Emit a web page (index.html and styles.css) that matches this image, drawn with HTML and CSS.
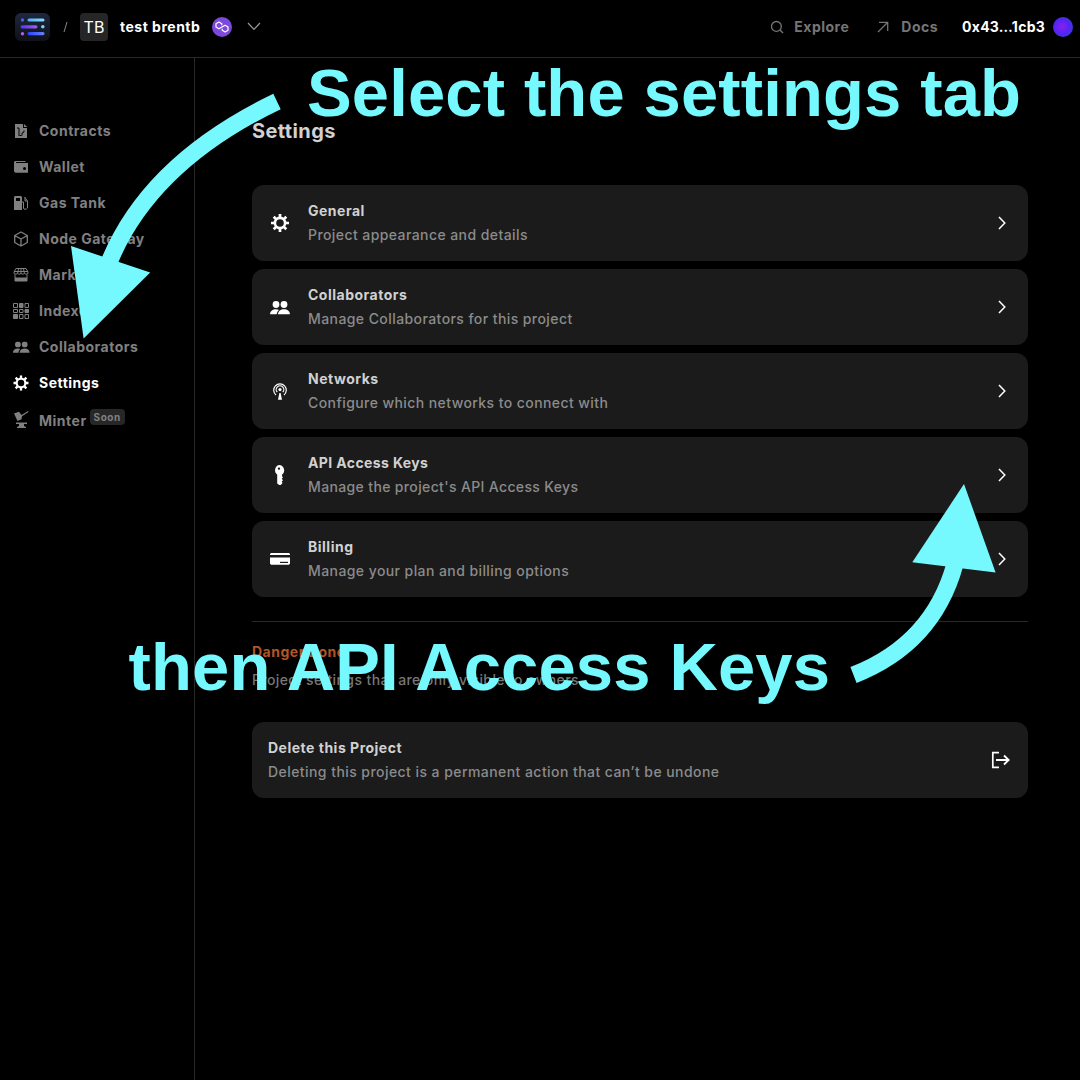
FILE: index.html
```html
<!DOCTYPE html>
<html lang="en">
<head>
<meta charset="utf-8">
<title>Settings</title>
<link rel="stylesheet" href="styles.css">
</head>
<body>
<svg class="defs" aria-hidden="true">
  <defs>
    <symbol id="gear" viewBox="0 0 18 18">
      <circle cx="9" cy="9" r="5.1" fill="none" stroke="currentColor" stroke-width="2.6"/>
      <path d="M9 0v3.5M9 14.5V18M0 9h3.5M14.500 9H18M2.700 2.700l2.300 2.300M13 13l2.300 2.300M15.300 2.700L13 5M5 13l-2.300 2.300" fill="none" stroke="currentColor" stroke-width="2.7"/>
    </symbol>
    <symbol id="people" viewBox="0 0 20 14">
      <circle cx="6" cy="3.500" r="3.400" fill="currentColor"/>
      <circle cx="14" cy="3.500" r="3.400" fill="currentColor"/>
      <path d="M0 13.300C.3 10 2.700 8.300 6 8.300c1.200 0 2.200.2 3.100.6-1.400 1-2.100 2.500-2.400 4.400zM8 13.300C8.300 10 10.700 8.300 14 8.300s5.700 1.700 6 5z" fill="currentColor"/>
    </symbol>
    <symbol id="chevron" viewBox="0 0 10 14">
      <path d="M2 1l5.800 6L2 13" fill="none" stroke="currentColor" stroke-width="1.500"/>
    </symbol>
    <linearGradient id="logoBg" x2="0" y2="1"><stop stop-color="#1d273d"/><stop offset="1" stop-color="#0f1119"/></linearGradient>
    <linearGradient id="sky"><stop stop-color="#4bb0ff"/><stop offset="1" stop-color="#86dcfb"/></linearGradient>
    <linearGradient id="violet"><stop stop-color="#4f39ee"/><stop offset="1" stop-color="#a45cf7"/></linearGradient>
    <linearGradient id="blue"><stop stop-color="#2842ff"/><stop offset="1" stop-color="#6981fb"/></linearGradient>
  </defs>
</svg>

<header class="topbar">
  <svg class="logo" viewBox="0 0 35 28">
    <rect width="35" height="28" rx="6" fill="url(#logoBg)"/>
    <circle cx="7.500" cy="7" r="1.700" fill="#505cf7"/>
    <rect x="12.500" y="5.400" width="17" height="3.200" rx="1.600" fill="url(#sky)"/>
    <rect x="5.500" y="12.200" width="17" height="3.200" rx="1.600" fill="url(#violet)"/>
    <circle cx="27.800" cy="13.800" r="1.800" fill="#6fd0fb"/>
    <circle cx="7.500" cy="20.700" r="1.700" fill="#b45ce8"/>
    <rect x="12.500" y="19" width="17" height="3.200" rx="1.600" fill="url(#blue)"/>
  </svg>
  <svg class="slash" viewBox="0 0 5 12"><path d="M4 1L1 11" fill="none" stroke="#888" stroke-width="1"/></svg>
  <span class="initials">TB</span>
  <span class="project-name">test brentb</span>
  <svg class="chain" viewBox="0 0 20 20">
    <circle cx="10" cy="10" r="10" fill="#7c49dc"/>
    <path d="M9.800 8.300V6.800L6.900 5.100 4 6.800v3.300l2.900 1.700 6.200-3.500L16 10v3.300L13.100 15l-2.900-1.700v-1.500" fill="none" stroke="#fff" stroke-width="1.200" stroke-linejoin="round"/>
  </svg>
  <svg class="caret" viewBox="0 0 14 9"><path d="M1 1l6 6.300L13 1" fill="none" stroke="#999" stroke-width="1.200"/></svg>
  <nav class="top-links">
    <a class="top-link explore"><svg class="search" viewBox="0 0 14 14"><path d="M10 10l3 3" stroke="currentColor" stroke-width="1.400"/><circle cx="6.400" cy="6.400" r="4.900" fill="none" stroke="currentColor" stroke-width="1.300"/></svg><span>Explore</span></a>
    <a class="top-link docs"><svg class="external" viewBox="0 0 12 12"><path d="M1 11L10.500 1.500M2 1.300h8.700V10" fill="none" stroke="currentColor" stroke-width="1.300"/></svg><span>Docs</span></a>
    <a class="account"><span>0x43…1cb3</span><i class="avatar"></i></a>
  </nav>
</header>

<div class="shell">
  <aside class="sidebar">
    <a class="item"><svg viewBox="0 0 18 18"><path d="M3 2h8v4h4v10H3zM12 2l3.200 3H12z" fill="currentColor"/><path d="M5 6h2v8M10 13.500V11l2-1V8.500" fill="none" stroke="#000" stroke-width="1"/><path d="M7.500 13.500h2" stroke="#000"/></svg><span>Contracts</span></a>
    <a class="item"><svg viewBox="0 0 18 18"><path d="M3 3h10.500v1H4v1h12v9.800H3.500L2 13.500V4z" fill="currentColor"/><circle cx="12.500" cy="10.400" r="1.500" fill="#000"/></svg><span>Wallet</span></a>
    <a class="item"><svg viewBox="0 0 18 18"><path fill-rule="evenodd" d="M2 3l1-1h6l1 1v13H2zM4 4v3h4V4z" fill="currentColor"/><path d="M10 8h1.500v6q0 1.300 1.500 1.300T15.500 14V7l-3-4M13 3.500V7h2" fill="none" stroke="currentColor" stroke-width="1"/></svg><span>Gas Tank</span></a>
    <a class="item"><svg viewBox="0 0 18 18"><path d="M9 2l6.300 3.500v7L9 16l-6.300-3.500v-7zM2.700 5.500L9 9l6.300-3.500M9 9v7" fill="none" stroke="currentColor" stroke-width="1.300" stroke-linejoin="round"/></svg><span>Node Gateway</span></a>
    <a class="item"><svg viewBox="0 0 18 18"><path d="M4 2.500h10l2 3.500v1.500q-2 1.500-3.500 0-1.800 1.500-3.500 0-1.800 1.500-3.500 0-1.500 1.500-3.500 0V6zM2 5.500h14M6.500 3l-1 4.500M9 3v4.500M11.500 3l1 4.500M3 8.500v6.500h12V8.500" fill="none" stroke="currentColor"/><path d="M3 11.500h12V15H3z" fill="currentColor"/></svg><span>Marketplace</span></a>
    <a class="item"><svg viewBox="0 0 18 18"><g fill="none" stroke="currentColor"><path d="M1.500 1.500h4v4h-4zM13 1.500h3.500v4H13zM1.500 7.500h4v3h-4zM7.500 7.500h3.500v3H7.500zM7.500 12.500h3.500v4H7.500zM13 12.500h3.500v4H13z"/><path d="M7.500 1.500h3.500v4H7.500zM13 7.500h3.500v3H13zM1.500 12.500h4v4h-4z" fill="currentColor"/></g></svg><span>Indexer</span></a>
    <a class="item"><svg viewBox="0 0 18 18"><use href="#people" x="0.800" y="3.500" width="17" height="11.900"/></svg><span>Collaborators</span></a>
    <a class="item active"><svg viewBox="0 0 18 18"><use href="#gear" x="1.300" y="1.300" width="15.400" height="15.400"/></svg><span>Settings</span></a>
    <a class="item minter"><svg viewBox="0 0 18 18"><path d="M2 3.500l5-1.800 2.500 3.200L16 1l.5 1L10 6.300l-.5 3-4 1.700zM4 12.500h11v1.500h-3v2l2 1v1H5v-1l2-1v-2H4z" fill="currentColor"/></svg><span>Minter</span><em class="soon">Soon</em></a>
  </aside>

  <main class="content">
    <h1>Settings</h1>
    <section class="cards">
      <a class="card"><svg class="card-icon" viewBox="0 0 24 24"><use href="#gear" x="3" y="3" width="18" height="18"/></svg><div class="copy"><h2>General</h2><p>Project appearance and details</p></div><svg class="chevron"><use href="#chevron"/></svg></a>
      <a class="card"><svg class="card-icon" viewBox="0 0 24 24"><use href="#people" x="2" y="6" width="20" height="14"/></svg><div class="copy"><h2>Collaborators</h2><p>Manage Collaborators for this project</p></div><svg class="chevron"><use href="#chevron"/></svg></a>
      <a class="card"><svg class="card-icon" viewBox="0 0 24 24"><path d="M8 16a6.300 6.300 0 1 1 8 0M9.300 13.200a3.800 3.800 0 1 1 5.400 0" fill="none" stroke="#fff" stroke-width="1.200"/><circle cx="12" cy="10.600" r="1.600" fill="#fff"/><path d="M11.400 14h1.200l1.400 6.800h-4z" fill="#fff"/></svg><div class="copy"><h2>Networks</h2><p>Configure which networks to connect with</p></div><svg class="chevron"><use href="#chevron"/></svg></a>
      <a class="card"><svg class="card-icon" viewBox="0 0 24 24"><path fill-rule="evenodd" d="M11 2a5.400 5.400 0 0 1 3 9.700v1.500l1 1-1.200 1.500 1.200 1.500-1.200 1.300.7 1.500-1.700 2h-1.600l-2-1.500v-9A5.400 5.400 0 0 1 11 2zm0 2.400a1.200 1.200 0 1 0 0 2.400 1.200 1.200 0 0 0 0-2.400z" fill="#fff"/></svg><div class="copy"><h2 class="snug">API Access Keys</h2><p class="tight">Manage the project's API Access Keys</p></div><svg class="chevron"><use href="#chevron"/></svg></a>
      <a class="card"><svg class="card-icon" viewBox="0 0 24 24"><path d="M2 8V7l1-1h18l1 1v1zM2 10.500h20v6l-1 1.200H3l-1-1.200z" fill="#fff"/><path d="M12 15.400h8" stroke="#1b1b1b" stroke-width="1.200"/></svg><div class="copy"><h2>Billing</h2><p>Manage your plan and billing options</p></div><svg class="chevron"><use href="#chevron"/></svg></a>
    </section>
    <section class="danger">
      <h2>Danger Zone</h2>
      <p>Project settings that are only visible to owners</p>
      <a class="card delete"><div class="copy"><h2>Delete this Project</h2><p>Deleting this project is a permanent action that can’t be undone</p></div><svg class="leave" viewBox="0 0 20 18"><path d="M8 1.700H1.800v14.600H8" fill="none" stroke="#fff" stroke-width="1.700"/><path d="M5 9h12.500M13 4.500L17.700 9 13 13.500" fill="none" stroke="#fff" stroke-width="1.800"/></svg></a>
    </section>
  </main>
</div>

<svg class="annotations" viewBox="0 0 1080 1080">
  <path class="shaft" d="M277 101.500Q148 163.500 108 265"/>
  <path class="head" d="M71 246L150.200 272.500 83.600 338.500z"/>
  <path class="shaft" d="M853.500 675Q933 644 955 564"/>
  <path class="head" d="M964 484L995.600 572.600 912.300 562.300z"/>
  <text x="307" y="116" textLength="714">Select the settings tab</text>
  <text x="128.500" y="690" textLength="701.500">then API Access Keys</text>
</svg>
</body>
</html>
```
FILE: styles.css
```css
* { box-sizing: border-box; }
body {
  margin: 0;
  height: 1080px;
  overflow: hidden;
  background: #000;
  color: #d1d1d1;
  font: 500 14px/20px Inter, "Liberation Sans", sans-serif;
  letter-spacing: 0.5px;
}
h1, h2, p { margin: 0; }
svg { display: block; flex: none; }
.defs { position: absolute; width: 0; height: 0; }

.topbar {
  display: flex;
  align-items: center;
  height: 58px;
  padding: 0 7px 4px 15px;
  border-bottom: 1px solid #282828;
}
.logo { width: 35px; height: 28px; }
.slash { width: 5px; height: 12px; margin-left: 13px; }
.initials {
  width: 28px;
  height: 28px;
  margin-left: 12px;
  border-radius: 4px;
  background: #262626;
  color: #fff;
  font-size: 16px;
  font-weight: 400;
  line-height: 28px;
  text-align: center;
  letter-spacing: 0;
}
.project-name { margin-left: 12px; color: #fff; font-weight: 700; letter-spacing: 0.5px; }
.chain { width: 20px; height: 20px; margin-left: 12px; }
.caret { width: 14px; height: 9px; margin-left: 15px; }
.top-links { display: flex; align-items: center; margin-left: auto; font-weight: 700; }
.top-link { display: flex; align-items: center; color: #757575; }
.search { width: 14px; height: 14px; margin-right: 10px; }
.external { width: 12px; height: 12px; margin-right: 12px; }
.docs { margin-left: 28px; }
.account { display: flex; align-items: center; gap: 8px; margin-left: 24px; color: #fff; letter-spacing: 0.25px; }
.avatar { width: 20px; height: 20px; border-radius: 50%; background: radial-gradient(circle at 45% 48%, #8b20ed, #5025f5 50%, #2850c4); }

.shell { display: flex; height: 1022px; }
.sidebar {
  display: flex;
  flex: none;
  flex-direction: column;
  gap: 16px;
  width: 195px;
  padding: 63px 0 0 12px;
  border-right: 1px solid #282828;
}
.item { display: flex; align-items: center; gap: 9px; height: 20px; color: #808080; font-weight: 700; }
.item svg { width: 18px; height: 18px; }
.item.active { color: #fff; }
.minter { padding-top: 2px; height: 22px; }
.minter svg { margin-top: -5px; }
.soon {
  height: 16px;
  margin: -9px 0 0 -6px;
  padding: 0 4px;
  border-radius: 4px;
  background: #272727;
  font-size: 10px;
  font-style: normal;
  line-height: 17px;
}

.content { flex: 1; padding: 59px 52px 0 57px; }
h1 { height: 68px; font-size: 20px; font-weight: 700; line-height: 28px; letter-spacing: 0.4px; }
.cards {
  display: flex;
  flex-direction: column;
  gap: 8px;
  padding-bottom: 24px;
  border-bottom: 1px solid #282828;
}
.card {
  display: flex;
  align-items: center;
  height: 76px;
  padding: 0 16px;
  border-radius: 12px;
  background: #1b1b1b;
  color: #fff;
}
.card-icon { width: 24px; height: 24px; margin-right: 16px; }
.copy { flex: 1; }
.copy h2, .danger > h2 { font-size: 14px; font-weight: 700; line-height: 20px; }
.copy h2 { color: #d1d1d1; }
.copy .snug { letter-spacing: 0.38px; }
.copy p { margin-top: 4px; color: #8b8b8b; letter-spacing: 0.42px; }
.copy .tight { letter-spacing: 0.36px; }
.chevron { width: 10px; height: 14px; margin-right: 5px; }
.danger { padding-top: 20px; }
.danger > h2 { color: #b35427; }
.danger > p { margin: 8px 0 32px; color: #777; letter-spacing: 0.4px; }
.delete .copy p { letter-spacing: 0.44px; }
.leave { width: 20px; height: 18px; margin-right: 1px; }

/* Callouts drawn over the page */
.annotations { position: absolute; top: 0; left: 0; width: 1080px; height: 1080px; pointer-events: none; }
.shaft { fill: none; stroke: #76f9fe; stroke-width: 17px; }
.head { fill: #76f9fe; }
.annotations text { fill: #76f9fe; font: 700 67px "Liberation Sans", Arial, sans-serif; letter-spacing: 0; }
```
